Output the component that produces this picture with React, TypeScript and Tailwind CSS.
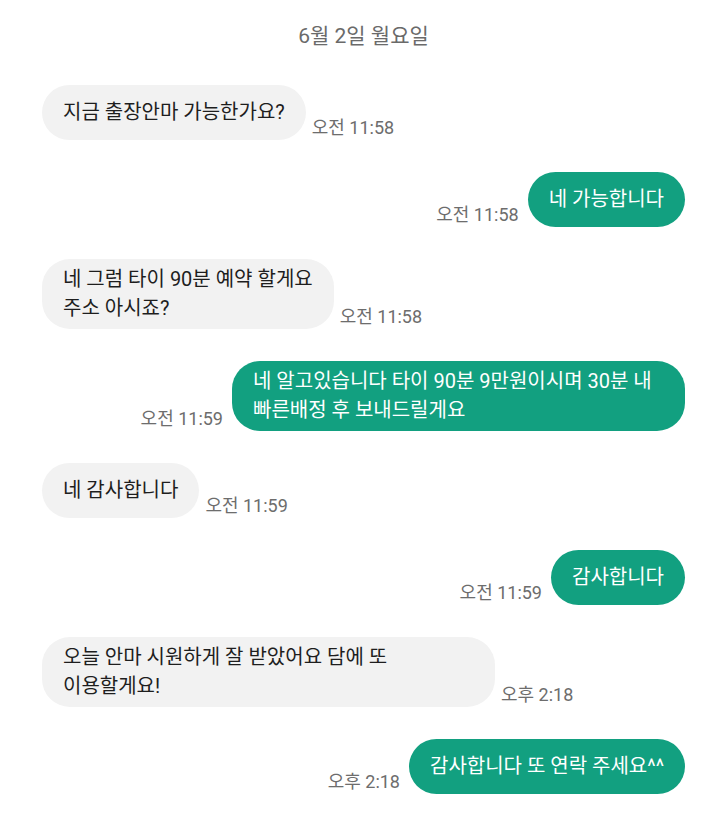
import React from "react";

type Message = {
  id: number;
  mine: boolean;
  lines: string[];
  time: string;
  wide?: boolean;
};

const MESSAGES: Message[] = [
  { id: 1, mine: false, lines: ["지금 출장안마 가능한가요?"], time: "오전 11:58" },
  { id: 2, mine: true, lines: ["네 가능합니다"], time: "오전 11:58" },
  { id: 3, mine: false, lines: ["네 그럼 타이 90분 예약 할게요", "주소 아시죠?"], time: "오전 11:58" },
  {
    id: 4,
    mine: true,
    lines: ["네 알고있습니다 타이 90분 9만원이시며 30분 내", "빠른배정 후 보내드릴게요"],
    time: "오전 11:59",
    wide: true,
  },
  { id: 5, mine: false, lines: ["네 감사합니다"], time: "오전 11:59" },
  { id: 6, mine: true, lines: ["감사합니다"], time: "오전 11:59" },
  {
    id: 7,
    mine: false,
    lines: ["오늘 안마 시원하게 잘 받았어요 담에 또", "이용할게요!"],
    time: "오후 2:18",
    wide: true,
  },
  { id: 8, mine: true, lines: ["감사합니다 또 연락 주세요^^"], time: "오후 2:18" },
];

const Bubble: React.FC<{ m: Message }> = ({ m }) => (
  <div
    className={
      "flex min-h-[55px] items-center rounded-[28px] px-[21px] py-[6px] text-[20px] leading-[29px] " +
      (m.mine ? "bg-[#12a080] text-white" : "bg-[#f2f2f2] text-[#1e1e1e]") +
      (m.wide ? " w-[453px]" : "")
    }
  >
    <div>
      {m.lines.map((l, i) => (
        <div key={i} className="whitespace-nowrap">
          {l}
        </div>
      ))}
    </div>
  </div>
);

const Time: React.FC<{ t: string }> = ({ t }) => (
  <span className="mb-[1px] whitespace-nowrap text-[18px] leading-[22px] text-[#6d6d6d]">{t}</span>
);

export default function App() {
  return (
    <div
      className="min-h-screen bg-white pl-[42px] pr-[35px] pt-[22px]"
      style={{ fontFamily: 'Roboto, "Noto Sans CJK KR", "Noto Sans", sans-serif' }}
    >
      <div className="mb-[35px] text-center text-[21px] leading-[28px] text-[#6a6a6a]">6월 2일 월요일</div>

      <div className="flex flex-col gap-[32px]">
        {MESSAGES.map(m =>
          m.mine ? (
            <div key={m.id} className="flex items-end justify-end gap-[9px]">
              <Time t={m.time} />
              <Bubble m={m} />
            </div>
          ) : (
            <div key={m.id} className="flex items-end gap-[6px]">
              <Bubble m={m} />
              <Time t={m.time} />
            </div>
          )
        )}
      </div>
    </div>
  );
}
